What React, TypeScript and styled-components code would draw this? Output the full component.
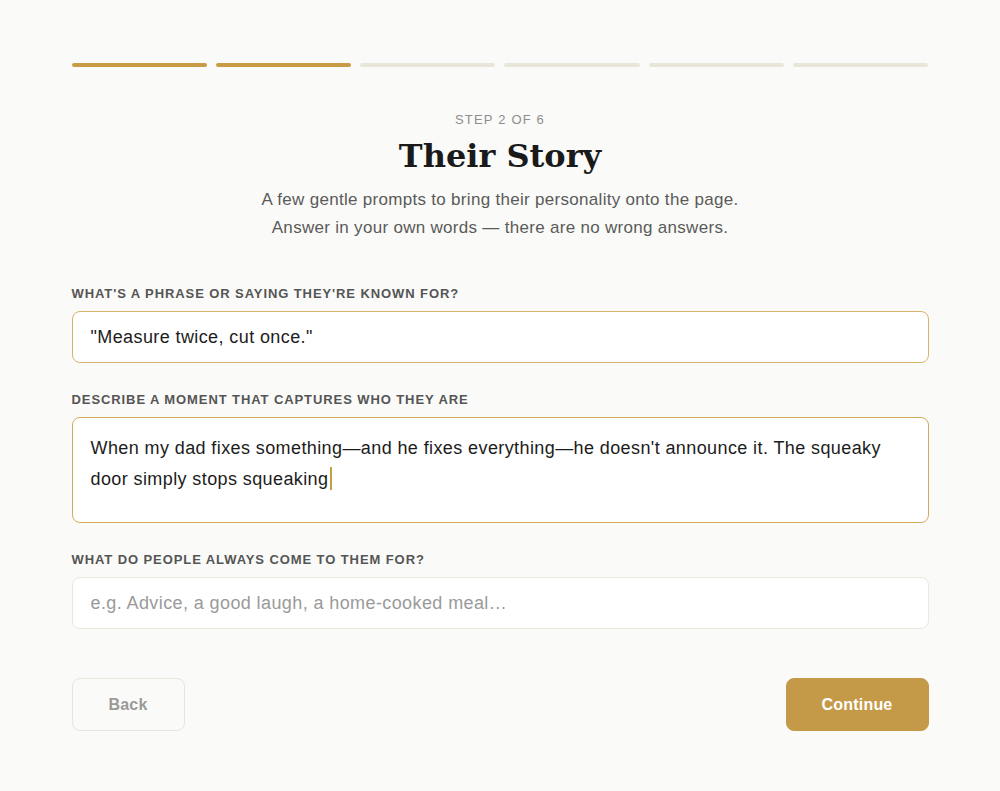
import React from "react";
import styled, { createGlobalStyle } from "styled-components";

const GlobalStyle = createGlobalStyle`
  html, body {
    margin: 0;
    padding: 0;
    background: #fafaf8;
  }
  body {
    font-family: "Liberation Sans", Arial, sans-serif;
    color: #1c1c1c;
  }
`;

const Page = styled.div`
  width: 857px;
  margin: 0 auto;
  padding-top: 63px;
  box-sizing: border-box;
`;

const Progress = styled.div`
  display: grid;
  grid-template-columns: repeat(6, 1fr);
  gap: 9px;
`;

const Segment: any = styled.div`
  height: 4px;
  border-radius: 2px;
  background: ${(props: any) => (props.done ? "#c89b45" : "#e9e5da")};
`;

const Header = styled.div`
  display: flex;
  flex-direction: column;
  align-items: center;
  margin-top: 45px;
  text-align: center;
`;

const StepLabel = styled.div`
  font-size: 13px;
  letter-spacing: 0.09em;
  color: #8e8e8e;
  line-height: 16px;
`;

const Title = styled.h1`
  margin: 8px 0 0;
  font-family: "DejaVu Serif", Georgia, serif;
  font-weight: 700;
  font-size: 32px;
  line-height: 40px;
  color: #1a1a1a;
`;

const Subtitle = styled.p`
  margin: 10px 0 0;
  font-size: 17px;
  letter-spacing: 0.3px;
  line-height: 28px;
  color: #5a5a5a;
`;

const Form = styled.div`
  display: flex;
  flex-direction: column;
  gap: 29px;
  margin-top: 44px;
`;

const Field = styled.div`
  display: flex;
  flex-direction: column;
  gap: 10px;
`;

const Label = styled.label`
  font-size: 13px;
  font-weight: 700;
  letter-spacing: 0.07em;
  text-transform: uppercase;
  color: #555;
  line-height: 15px;
`;

const Input: any = styled.input`
  box-sizing: border-box;
  width: 100%;
  height: 52px;
  padding: 0 18px;
  border-radius: 8px;
  border: 1px solid ${(props: any) => (props.filled ? "#d8b36c" : "#ebe7dd")};
  background: #fff;
  font-family: "Liberation Sans", Arial, sans-serif;
  font-size: 18px;
  letter-spacing: 0.4px;
  color: #1c1c1c;
  outline: none;

  &::placeholder {
    color: #9a9a9a;
  }
`;

const TextArea = styled.div`
  box-sizing: border-box;
  width: 100%;
  height: 106px;
  padding: 15px 18px;
  border-radius: 8px;
  border: 1px solid #d4aa5c;
  background: #fff;
  font-size: 18px;
  letter-spacing: 0.4px;
  line-height: 31px;
  color: #1c1c1c;
`;

const Caret = styled.span`
  display: inline-block;
  width: 2px;
  height: 23px;
  margin-left: 2px;
  vertical-align: -5px;
  background: #c89b45;
`;

const Actions = styled.div`
  display: flex;
  justify-content: space-between;
  margin-top: 49px;
`;

const Button: any = styled.button`
  height: 53px;
  border-radius: 8px;
  font-family: "Liberation Sans", Arial, sans-serif;
  font-size: 16px;
  font-weight: 700;
  letter-spacing: 0.2px;
  cursor: pointer;
  border: 1px solid ${(props: any) => (props.primary ? "#c49a48" : "#e9e5da")};
  background: ${(props: any) => (props.primary ? "#c49a48" : "transparent")};
  color: ${(props: any) => (props.primary ? "#fff" : "#9a9a9a")};
  width: ${(props: any) => (props.primary ? "143px" : "113px")};
`;

const App = () => {
  const steps = [true, true, false, false, false, false];

  return (
    <>
      <GlobalStyle />
      <Page>
        <Progress>
          {steps.map((done, i) => (
            <Segment key={i} done={done} />
          ))}
        </Progress>

        <Header>
          <StepLabel>STEP 2 OF 6</StepLabel>
          <Title>Their Story</Title>
          <Subtitle>
            A few gentle prompts to bring their personality onto the page.
            <br />
            Answer in your own words — there are no wrong answers.
          </Subtitle>
        </Header>

        <Form>
          <Field>
            <Label>What's a phrase or saying they're known for?</Label>
            <Input filled defaultValue={'"Measure twice, cut once."'} />
          </Field>
          <Field>
            <Label>Describe a moment that captures who they are</Label>
            <TextArea role="textbox">
              When my dad fixes something—and he fixes everything—he doesn't
              announce it. The squeaky door simply stops squeaking
              <Caret />
            </TextArea>
          </Field>
          <Field>
            <Label>What do people always come to them for?</Label>
            <Input placeholder="e.g. Advice, a good laugh, a home-cooked meal…" />
          </Field>
        </Form>

        <Actions>
          <Button>Back</Button>
          <Button primary>Continue</Button>
        </Actions>
      </Page>
    </>
  );
};

export default App;
